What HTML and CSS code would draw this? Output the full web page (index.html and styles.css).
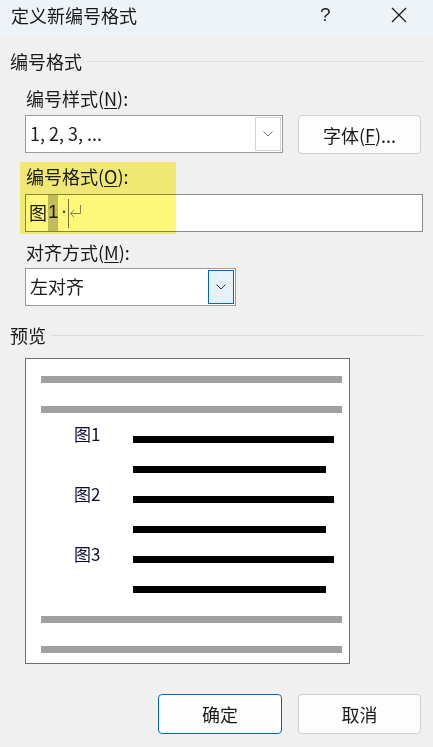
FILE: index.html
```html
<!DOCTYPE html>
<html lang="zh-CN">
<head>
<meta charset="utf-8">
<title>定义新编号格式</title>
<link rel="stylesheet" href="styles.css">
</head>
<body>
<div class="window">
  <div class="titlebar">
    <span class="title">定义新编号格式</span>
    <span class="help">?</span>
    <span class="close">
      <svg width="16" height="16" viewBox="0 0 16 16"><path d="M1 1 L15 15 M15 1 L1 15" stroke="#1b1b1b" stroke-width="1.3" fill="none"/></svg>
    </span>
  </div>
  <div class="content">
    <div class="group-head"><span>编号格式</span><i class="rule"></i></div>
    <div class="field">
      <div class="label label-first">编号样式(<u>N</u>):</div>
      <div class="row">
        <div class="combo combo-style">
          <span class="combo-text">1, 2, 3, ...</span>
          <span class="drop"><svg width="10" height="6" viewBox="0 0 10 6"><path d="M0.5 0.5 L5 5 L9.5 0.5" stroke="#6a6a6a" stroke-width="1" fill="none"/></svg></span>
        </div>
        <div class="btn btn-font">字体(<u>F</u>)...</div>
      </div>
      <div class="label label-second">编号格式(<u>O</u>):</div>
      <div class="input">
        <span class="num-prefix">图</span><span class="num-sel">1</span><span class="num-dot">·</span><span class="caret"></span><span class="para"><svg width="13" height="14" viewBox="0 0 13 14"><path d="M11.5 1 V9.5 H1.5 M5 6 L1.5 9.5 L5 13" stroke="#8c8c8c" stroke-width="1" fill="none"/></svg></span>
      </div>
      <div class="label label-third">对齐方式(<u>M</u>):</div>
      <div class="combo combo-align">
        <span class="combo-text">左对齐</span>
        <span class="drop drop-focus"><svg width="10" height="6" viewBox="0 0 10 6"><path d="M0.5 0.5 L5 5 L9.5 0.5" stroke="#333" stroke-width="1" fill="none"/></svg></span>
      </div>
    </div>
    <div class="group-head group-preview"><span>预览</span><i class="rule"></i></div>
    <div class="preview">
      <div class="bar gray"></div>
      <div class="bar gray"></div>
      <div class="item">
        <div class="item-label">图1</div>
        <div class="item-lines"><div class="bar black long"></div><div class="bar black short"></div></div>
      </div>
      <div class="item">
        <div class="item-label">图2</div>
        <div class="item-lines"><div class="bar black long"></div><div class="bar black short"></div></div>
      </div>
      <div class="item">
        <div class="item-label">图3</div>
        <div class="item-lines"><div class="bar black long"></div><div class="bar black short"></div></div>
      </div>
      <div class="bar gray"></div>
      <div class="bar gray"></div>
    </div>
    <div class="actions">
      <div class="btn btn-ok">确定</div>
      <div class="btn btn-cancel">取消</div>
    </div>
  </div>
  <div class="highlight"></div>
</div>
</body>
</html>
```

FILE: styles.css
```css
html, body {
  margin: 0;
  padding: 0;
}
body {
  background: #f0f0f0;
  font-family: "Noto Sans CJK SC", "Noto Sans", sans-serif;
  font-size: 18px;
  color: #1a1a1a;
}
.window {
  position: relative;
  width: 433px;
  height: 747px;
  overflow: hidden;
  background: #f0f0f0;
}
.titlebar {
  height: 36px;
  background: #eef3f8;
  display: flex;
  align-items: flex-start;
  box-sizing: border-box;
  padding-top: 3px;
  line-height: 24px;
}
.title {
  margin-left: 11px;
  flex: 1;
}
.help {
  width: 14px;
  font-family: "Liberation Sans", sans-serif;
  font-size: 19px;
  color: #222;
  margin-right: 57px;
}
.close {
  width: 16px;
  height: 16px;
  margin-top: 4px;
  margin-right: 26px;
}
.close svg { display: block; }
.content {
  padding: 0 10px 0 10px;
}
.group-head {
  display: flex;
  align-items: center;
  height: 24px;
  line-height: 24px;
  margin-top: 13px;
  gap: 5px;
}
.group-head .rule {
  flex: 1;
  height: 0;
  border-top: 1px solid #dcdcdc;
  margin-top: 1px;
}
.field {
  padding-left: 15px;
}
.label {
  height: 24px;
  line-height: 24px;
  padding-left: 1px;
}
.label u {
  text-underline-offset: 2px;
  text-decoration-thickness: 1px;
}
.label-first { margin-top: 13px; }
.label-second { margin-top: 10px; }
.label-third { margin-top: 8px; }
.row {
  display: flex;
  align-items: flex-start;
  margin-top: 5px;
  gap: 15px;
}
.combo {
  box-sizing: border-box;
  height: 38px;
  border: 1px solid #9a9a9a;
  background: #fff;
  display: flex;
  align-items: stretch;
}
.combo-style { width: 258px; }
.combo-align { width: 211px; margin-top: 4px; }
.combo-text {
  flex: 1;
  padding-left: 4px;
  line-height: 34px;
}
.drop {
  box-sizing: border-box;
  width: 26px;
  margin: 1px;
  border: 1px solid #d4d4d4;
  background: #fff;
  display: flex;
  align-items: center;
  justify-content: center;
}
.drop-focus {
  border-color: #0067c0;
  background: #e5f1fb;
  margin: 1px 1px 1px 0;
}
.btn {
  box-sizing: border-box;
  border: 1px solid #d0d0d0;
  border-radius: 4px;
  background: #fdfdfd;
  text-align: center;
  display: flex;
  align-items: center;
  justify-content: center;
}
.btn-font {
  width: 123px;
  height: 39px;
}
.input {
  box-sizing: border-box;
  margin-top: 6px;
  width: 398px;
  height: 38px;
  border: 1px solid #8a8a8a;
  background: #fff;
  display: flex;
  align-items: stretch;
  padding-left: 3px;
  line-height: 34px;
}
.num-prefix {
  width: 19px;
}
.num-sel {
  background: #c2c2c2;
  font-family: "Liberation Sans", sans-serif;
  width: 10px;
  text-align: center;
  font-size: 19px;
}
.num-dot {
  width: 9px;
  font-size: 12px;
  color: #555;
  text-align: center;
}
.caret {
  width: 0;
  border-left: 1px solid #777;
  margin: 4px 0 3px 1px;
}
.para {
  display: flex;
  align-items: center;
  padding-bottom: 4px;
}
.para svg { display: block; }
.group-preview {
  margin-top: 17px;
}
.preview {
  box-sizing: border-box;
  margin-top: 11px;
  margin-left: 15px;
  width: 325px;
  height: 306px;
  border: 1px solid #6e6e6e;
  background: #fff;
  display: flex;
  flex-direction: column;
  gap: 23px;
  padding: 17px 7px 0 15px;
}
.bar {
  height: 7px;
  flex: none;
}
.gray { background: #a0a0a0; }
.black { background: #000; }
.long { width: 201px; }
.short { width: 193px; }
.item {
  display: flex;
  align-items: flex-start;
}
.item-label {
  width: 92px;
  box-sizing: border-box;
  padding-left: 33px;
  font-size: 17px;
  line-height: 20px;
  height: 20px;
  margin-top: -12px;
  color: #0b0b30;
}
.item-lines {
  display: flex;
  flex-direction: column;
  gap: 23px;
}
.actions {
  display: flex;
  justify-content: flex-end;
  gap: 16px;
  margin-top: 30px;
  margin-right: 2px;
}
.btn-ok {
  width: 124px;
  height: 40px;
  border-color: #0067c0;
}
.btn-cancel {
  width: 123px;
  height: 40px;
}
.highlight {
  position: absolute;
  left: 20px;
  top: 162px;
  width: 156px;
  height: 72px;
  background: #fff77a;
  mix-blend-mode: multiply;
  pointer-events: none;
}
```
